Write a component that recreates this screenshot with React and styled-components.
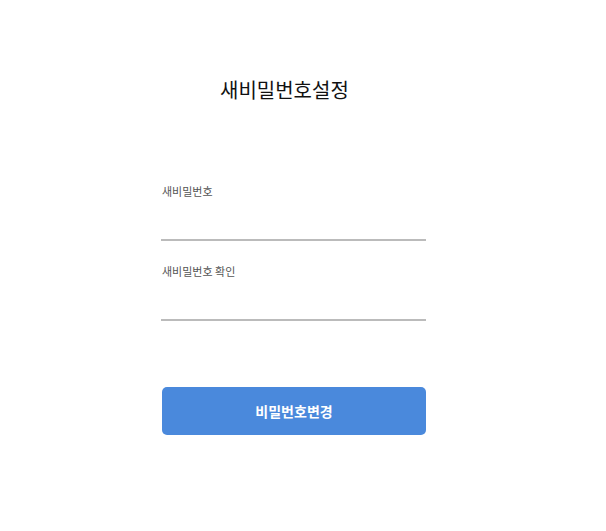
import React from 'react'
import styled, { createGlobalStyle } from 'styled-components'

const GlobalStyle = createGlobalStyle`
  body {
    margin: 0;
    background: #fff;
    font-family: 'Noto Sans CJK KR', 'Noto Sans', sans-serif;
  }
`

const Page = styled.div`
  padding: 75px 0 0 161px;
`

const Column = styled.div`
  width: 265px;
  display: flex;
  flex-direction: column;
`

const Title = styled.h2`
  margin: 0;
  padding-left: 59px;
  font-size: 20px;
  line-height: 30px;
  font-weight: 400;
  color: #111;
`

const Form = styled.form`
  margin-top: 78px;
  display: flex;
  flex-direction: column;
`

const Field = styled.label`
  display: flex;
  flex-direction: column;
  margin-bottom: ${(p) => p.$gap || 0}px;
`

const Label = styled.span`
  font-size: 11px;
  line-height: 16px;
  color: #555;
  padding-left: 1px;
`

const Input = styled.input`
  height: 40px;
  border: none;
  border-bottom: 2px solid #bbb;
  outline: none;
  padding: 0;
  font-size: 13px;
  background: transparent;
`

const Submit = styled.button`
  margin: 66px 0 0 1px;
  height: 48px;
  width: 264px;
  border: none;
  border-radius: 5px;
  background: #4a89dc;
  color: #fff;
  font-family: inherit;
  font-size: 14px;
  font-weight: 700;
  cursor: pointer;
`

export default function App() {
  return (
    <>
      <GlobalStyle />
      <Page>
        <Column>
          <Title>새비밀번호설정</Title>
          <Form onSubmit={(e) => e.preventDefault()}>
            <Field $gap={22}>
              <Label>새비밀번호</Label>
              <Input type="password" />
            </Field>
            <Field>
              <Label>새비밀번호 확인</Label>
              <Input type="password" />
            </Field>
            <Submit type="submit">비밀번호변경</Submit>
          </Form>
        </Column>
      </Page>
    </>
  )
}
